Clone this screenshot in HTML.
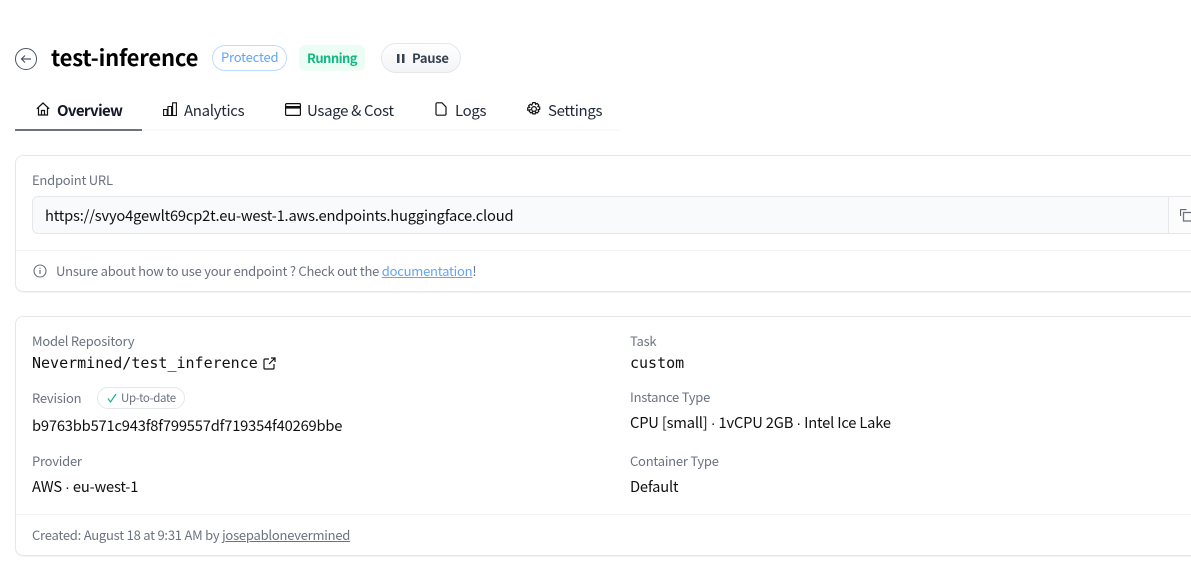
<!DOCTYPE html>
<html lang="en"><head><meta charset="utf-8"><title>test-inference</title>
<style>
html,body{margin:0;padding:0;background:#fff;width:1191px;height:569px;overflow:hidden}
body{position:relative;font-family:"Noto Sans CJK JP","Liberation Sans",sans-serif;color:#000;-webkit-font-smoothing:antialiased}
.t{position:absolute;white-space:nowrap;line-height:20px;height:20px}
.lbl{font-size:13px;color:#6b7280;letter-spacing:-.235px}
.val{font-size:14.7px;color:#111;letter-spacing:-.18px}
.mono{font-family:"DejaVu Sans Mono",monospace;font-size:15px;color:#111}
.tab{font-size:15px;color:#1f2937;letter-spacing:-.33px}
.box{position:absolute;box-sizing:border-box}
.dot{font-family:"Liberation Sans",sans-serif}
svg{position:absolute;overflow:visible}
</style></head><body>
<svg style="left:15px;top:48px" width="22" height="22" viewBox="0 0 22 22" fill="none"><circle cx="11" cy="11" r="10.5" stroke="#4b5563"/><path d="M16 11H6.5M10 7.5L6.5 11l3.5 3.5" stroke="#4b5563" stroke-width="1.2"/></svg>
<div class="t" style="left:51px;top:47px;font-size:22px;font-weight:700;letter-spacing:-.2px">test-inference</div>
<div class="box" style="left:212px;top:45px;width:75px;height:26px;border:1px solid #bfdbfe;border-radius:13px"></div>
<div class="t" style="left:221px;top:47px;font-size:13px;color:#60a5fa;letter-spacing:-.2px">Protected</div>
<div class="box" style="left:299px;top:45px;width:66px;height:26px;background:#ecfdf5;border-radius:6px"></div>
<div class="t" style="left:307px;top:48px;font-size:13px;font-weight:700;color:#10b981;letter-spacing:-.55px">Running</div>
<div class="box" style="left:381px;top:43px;width:80px;height:30px;border:1px solid #e5e7eb;border-radius:15px;background:linear-gradient(#fff,#f3f4f6)"></div>
<svg style="left:397px;top:54px" width="8" height="9"><rect x="0" y="0" width="2.5" height="9" fill="#374151"/><rect x="5" y="0" width="2.5" height="9" fill="#374151"/></svg>
<div class="t" style="left:412px;top:48px;font-size:13px;font-weight:700;color:#374151;letter-spacing:-.3px">Pause</div>

<svg style="left:36px;top:102px" width="14" height="14" viewBox="0 0 14 14" fill="none" stroke="#111" stroke-width="1.2"><path d="M.8 6.8L7 1l6.2 5.8M2.5 5.5V13h9V5.5M5.5 13V8.5h3V13"/></svg>
<div class="t tab" style="left:57px;top:101px;font-weight:700;color:#111827;letter-spacing:-.62px">Overview</div>
<svg style="left:163px;top:102px" width="14" height="14" viewBox="0 0 14 14" fill="none" stroke="#111" stroke-width="1.1"><path d="M.6 7.5h3.6v6H.6zM5 4.5h3.6v9H5zM9.6.8h3.8v12.7H9.6z"/></svg>
<div class="t tab" style="left:184px;top:101px">Analytics</div>
<svg style="left:285px;top:103px" width="16" height="13" viewBox="0 0 16 13"><rect x=".6" y=".6" width="14.8" height="11.8" rx="1" fill="none" stroke="#111" stroke-width="1.2"/><rect x="1" y="3" width="14" height="2.6" fill="#111"/></svg>
<div class="t tab" style="left:307px;top:101px">Usage &amp; Cost</div>
<svg style="left:435px;top:102px" width="12" height="14" viewBox="0 0 12 14" fill="none" stroke="#111" stroke-width="1.2"><path d="M1 2a1.2 1.2 0 0 1 1.2-1.2H7L11 5v7a1.2 1.2 0 0 1-1.2 1.2H2.2A1.2 1.2 0 0 1 1 12z"/></svg>
<div class="t tab" style="left:455px;top:101px">Logs</div>
<svg style="left:527px;top:102px" width="14" height="14" viewBox="0 0 14 14" fill="none" stroke="#111" stroke-width="1.2"><circle cx="7" cy="7" r="2.4"/><path d="M5.8.6h2.4l.4 1.7 1.5-.9 1.7 1.7-.9 1.5 1.8.4v2.4l-1.8.4.9 1.5-1.7 1.7-1.5-.9-.4 1.8H5.8l-.4-1.8-1.5.9-1.7-1.7.9-1.5L.7 8.2V5.8l1.8-.4-.9-1.5 1.7-1.7 1.5.9z"/></svg>
<div class="t tab" style="left:548px;top:101px">Settings</div>
<div class="box" style="left:15px;top:129px;width:606px;height:2px;background:#f9fafb"></div>
<div class="box" style="left:15px;top:129px;width:127px;height:2px;background:#6b7280"></div>

<div class="box" style="left:15px;top:155px;width:1200px;height:137px;border:1px solid #e5e7eb;border-radius:8px;box-shadow:0 1px 1px rgba(0,0,0,.05)"></div>
<div class="t lbl" style="left:32px;top:170px">Endpoint URL</div>
<div class="box" style="left:32px;top:196px;width:1180px;height:38px;border:1px solid #e5e7eb;border-radius:6px;background:#f9fafb"></div>
<div class="box" style="left:1168px;top:196px;width:40px;height:38px;border-left:1px solid #e5e7eb;background:#fcfcfd;border-top:1px solid #e5e7eb;border-bottom:1px solid #e5e7eb"></div>
<svg style="left:1180px;top:209px" width="14" height="13" fill="none"><path d="M6.5 .6H.6V7" stroke="#4b5563" stroke-width="1"/><rect x="3.5" y="3.5" width="12" height="8.5" stroke="#6b7280" stroke-width="1.3"/></svg>
<div class="t val" style="left:45px;top:206px">https://svyo4gewlt69cp2t.eu-west-1.aws.endpoints.huggingface.cloud</div>
<div class="box" style="left:16px;top:250px;width:1175px;height:1px;background:#f3f4f6"></div>
<svg style="left:33px;top:264px" width="14" height="14" fill="none" stroke="#6b7280" stroke-width="1.1"><circle cx="7" cy="7" r="6"/><path d="M7 6v4M7 3.8v1" stroke-width="1.2"/></svg>
<div class="t lbl" style="left:56px;top:261px">Unsure about how to use your endpoint ? Check out the <span style="color:#60a5fa;text-decoration:underline">documentation</span>!</div>

<div class="box" style="left:15px;top:316px;width:1200px;height:240px;border:1px solid #e5e7eb;border-radius:8px;box-shadow:0 1px 1px rgba(0,0,0,.05)"></div>
<div class="t lbl" style="left:32px;top:331px">Model Repository</div>
<div class="t mono" style="left:32px;top:353px">Nevermined/test_inference</div>
<svg style="left:263px;top:357px" width="13" height="13" fill="none" stroke="#111" stroke-width="1.2"><path d="M6 2H2a1 1 0 0 0-1 1v8a1 1 0 0 0 1 1h8a1 1 0 0 0 1-1V7M6 7l6-6M8 1h4v4"/></svg>
<div class="t lbl" style="left:32px;top:388px">Revision</div>
<div class="box" style="left:97px;top:387px;width:88px;height:22px;border:1px solid #e5e7eb;border-radius:11px"></div>
<svg style="left:107px;top:393px" width="10" height="10" fill="none" stroke="#10b981" stroke-width="1.2"><path d="M1 5.5L3.5 9 9 1"/></svg>
<div class="t" style="left:121px;top:388px;font-size:11.5px;color:#6b7280;letter-spacing:-.35px">Up-to-date</div>
<div class="t val" style="left:32px;top:416px">b9763bb571c943f8f799557df719354f40269bbe</div>
<div class="t lbl" style="left:32px;top:451px">Provider</div>
<div class="t val" style="left:32px;top:477px">AWS <span class="dot">·</span> eu-west-1</div>

<div class="t lbl" style="left:630px;top:331px">Task</div>
<div class="t mono" style="left:630px;top:353px">custom</div>
<div class="t lbl" style="left:630px;top:387px">Instance Type</div>
<div class="t val" style="left:630px;top:413px">CPU [small] <span class="dot">·</span> 1vCPU 2GB <span class="dot">·</span> Intel Ice Lake</div>
<div class="t lbl" style="left:630px;top:451px">Container Type</div>
<div class="t val" style="left:630px;top:477px">Default</div>

<div class="box" style="left:16px;top:514px;width:1175px;height:1px;background:#f3f4f6"></div>
<div class="t lbl" style="left:32px;top:525px">Created: August 18 at 9:31 AM by <span style="text-decoration:underline">josepablonevermined</span></div>
</body></html>
